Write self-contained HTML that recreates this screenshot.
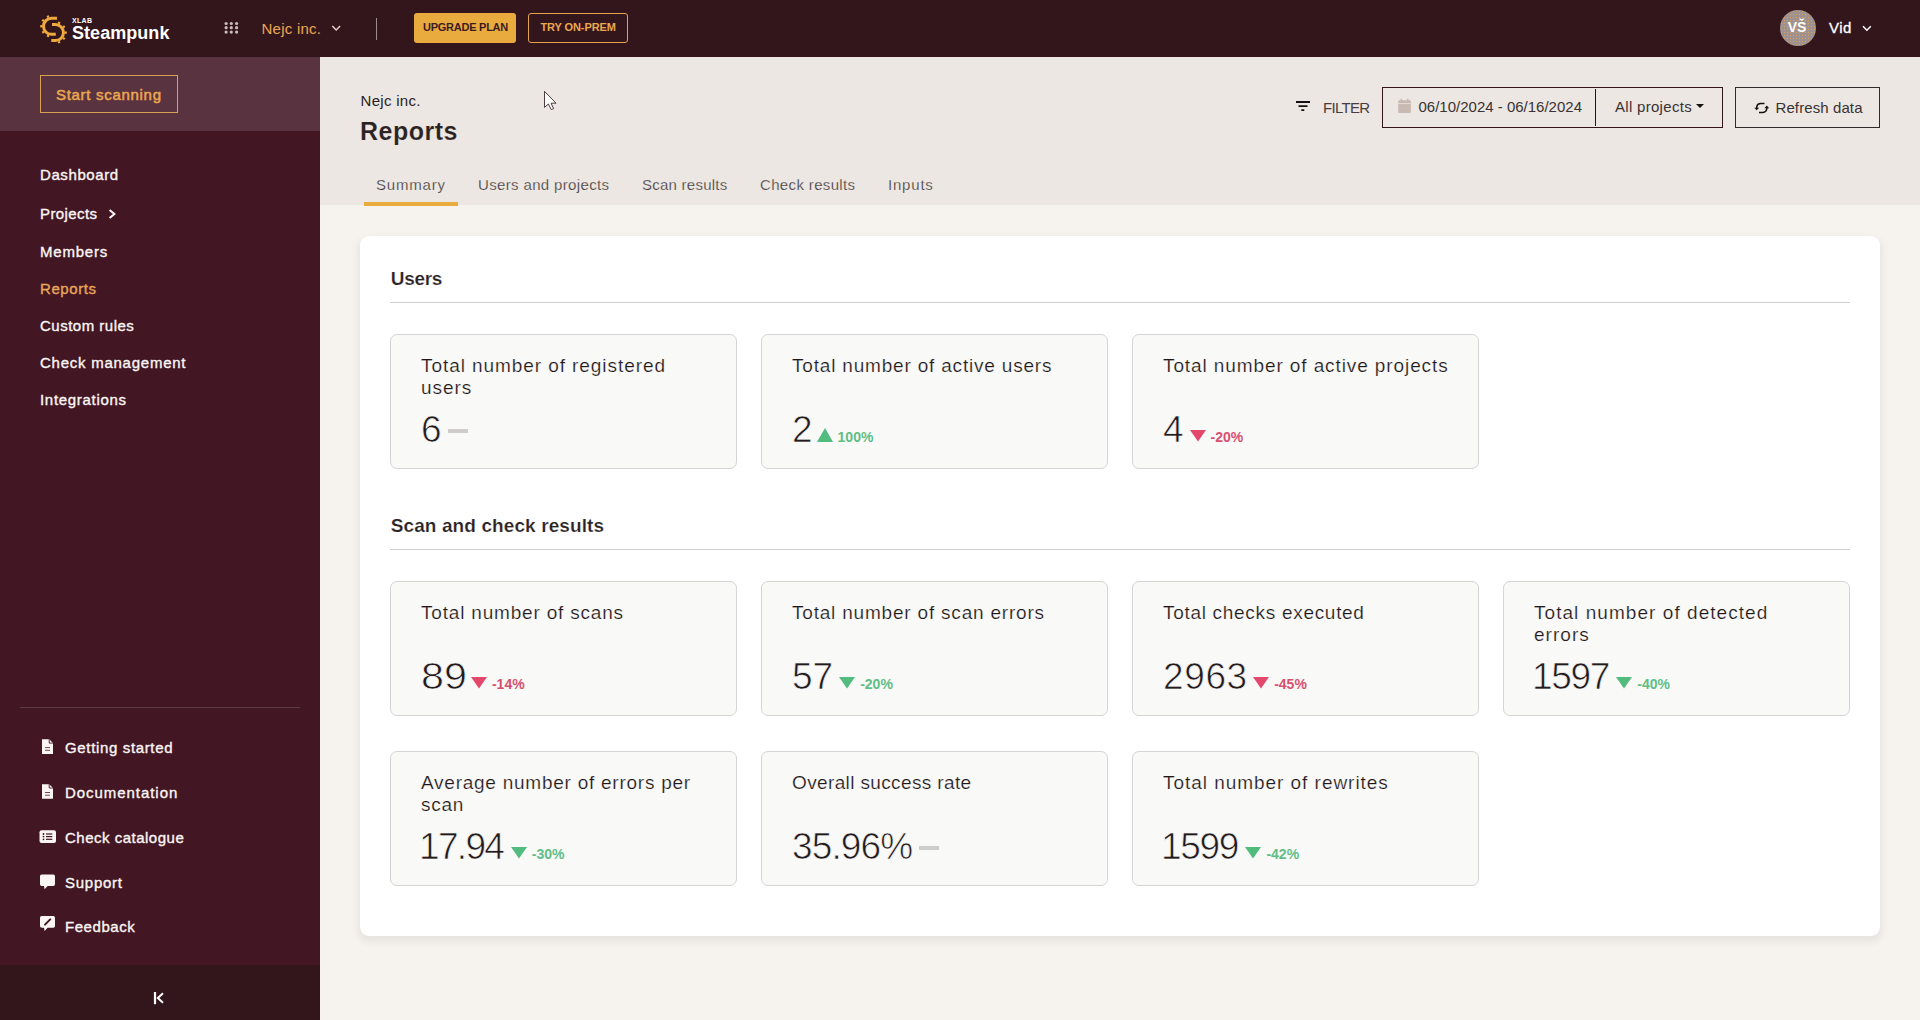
<!DOCTYPE html>
<html><head><meta charset="utf-8"><style>
*{margin:0;padding:0;box-sizing:border-box}
html,body{width:1920px;height:1020px;overflow:hidden;background:#f6f3ee;font-family:"Liberation Sans",sans-serif}
.a{position:absolute}
.t{position:absolute;white-space:nowrap;line-height:1}
.ct{position:absolute;font-size:19px;line-height:22px;color:#1f1718;letter-spacing:1px;white-space:nowrap;-webkit-text-stroke:.2px #f9f9f8}
.cn{position:absolute;font-size:37px;line-height:1;color:#231b1c;white-space:nowrap;-webkit-text-stroke:.7px #f9f9f8}
.cn span{-webkit-text-stroke:inherit}
.card{position:absolute;width:347px;height:135px;background:#f9f9f8;border:1px solid #d6d4d2;border-radius:7px}
.rule{position:absolute;left:390px;width:1460px;height:1px;background:#d3d1cf}
svg{position:absolute;overflow:visible}
</style></head><body>
<div class="a" style="left:0;top:0;width:1920px;height:57px;background:#33161c"></div>
<div class="a" style="left:0;top:57px;width:320px;height:963px;background:#421723"></div>
<div class="a" style="left:0;top:57px;width:320px;height:74px;background:#5a3341"></div>
<div class="a" style="left:0;top:965px;width:320px;height:55px;background:#33161c"></div>
<div class="a" style="left:320px;top:57px;width:1600px;height:148px;background:#ece7e2"></div>
<div class="a" style="left:360px;top:236px;width:1520px;height:700px;background:#fff;border-radius:9px;box-shadow:0 4px 7px 2px rgba(60,45,40,.075)"></div>
<svg style="left:0;top:0" width="1" height="1">
<g fill="none" stroke="#eeaa3c" stroke-width="3">
<path d="M57,18.3 L51.5,18.3 A8,8 0 0 0 51.5,34.3 L55.8,34.3"/>
<path d="M52,24.6 L55.5,24.6 A8,8 0 0 1 55.5,40.6 L51.3,40.6"/>
</g>
<rect x="60.70" y="25.15" width="2.1" height="2.3" fill="#eeaa3c" transform="rotate(250 51.5 26.3)"/><rect x="60.70" y="25.15" width="2.1" height="2.3" fill="#eeaa3c" transform="rotate(215 51.5 26.3)"/><rect x="60.70" y="25.15" width="2.1" height="2.3" fill="#eeaa3c" transform="rotate(180 51.5 26.3)"/><rect x="60.70" y="25.15" width="2.1" height="2.3" fill="#eeaa3c" transform="rotate(145 51.5 26.3)"/><rect x="60.70" y="25.15" width="2.1" height="2.3" fill="#eeaa3c" transform="rotate(110 51.5 26.3)"/>
<rect x="64.70" y="31.45" width="2.1" height="2.3" fill="#eeaa3c" transform="rotate(-70 55.5 32.6)"/><rect x="64.70" y="31.45" width="2.1" height="2.3" fill="#eeaa3c" transform="rotate(-35 55.5 32.6)"/><rect x="64.70" y="31.45" width="2.1" height="2.3" fill="#eeaa3c" transform="rotate(0 55.5 32.6)"/><rect x="64.70" y="31.45" width="2.1" height="2.3" fill="#eeaa3c" transform="rotate(35 55.5 32.6)"/><rect x="64.70" y="31.45" width="2.1" height="2.3" fill="#eeaa3c" transform="rotate(70 55.5 32.6)"/>
</svg>
<div class="t" style="left:72px;top:17.07px;font-size:7px;color:#fff;font-weight:bold;letter-spacing:.3px">XLAB</div>

<div class="t" style="left:72px;top:23.51px;font-size:18px;color:#fff;font-weight:bold;letter-spacing:.05px">Steampunk</div>

<svg style="left:0;top:0" width="1" height="1"><circle cx="226.1" cy="23.5" r="1.6" fill="#cbbcbd"/><circle cx="226.1" cy="27.7" r="1.6" fill="#cbbcbd"/><circle cx="226.1" cy="32.1" r="1.6" fill="#cbbcbd"/><circle cx="231.3" cy="23.5" r="1.6" fill="#cbbcbd"/><circle cx="231.3" cy="27.7" r="1.6" fill="#cbbcbd"/><circle cx="231.3" cy="32.1" r="1.6" fill="#cbbcbd"/><circle cx="236.6" cy="23.5" r="1.6" fill="#cbbcbd"/><circle cx="236.6" cy="27.7" r="1.6" fill="#cbbcbd"/><circle cx="236.6" cy="32.1" r="1.6" fill="#cbbcbd"/></svg>
<div class="t" style="left:261.5px;top:20.60px;font-size:15px;color:#eba84f;letter-spacing:.25px">Nejc inc.</div>

<svg style="left:0;top:0" width="1" height="1"><path d="M332.3,25.9 L336.2,29.9 L340.1,25.9" fill="none" stroke="#e8d4c8" stroke-width="1.4"/></svg>
<div class="a" style="left:376px;top:18px;width:1.4px;height:22px;background:#9a8a8c"></div>
<div class="a" style="left:414px;top:13px;width:102px;height:30px;background:#eaab3e;border-radius:3px"></div>
<div class="a" style="left:528px;top:13px;width:100px;height:30px;border:1px solid #e3a24c;border-radius:3px"></div>
<div class="t" style="left:423px;top:21.94px;font-size:11px;color:#3b1c22;font-weight:bold;letter-spacing:-.25px">UPGRADE PLAN</div>

<div class="t" style="left:540.5px;top:21.94px;font-size:11px;color:#eba84f;font-weight:bold;letter-spacing:-.1px">TRY ON-PREM</div>

<div class="a" style="left:1780px;top:10px;width:36px;height:36px;border-radius:50%;background:radial-gradient(circle at 1.5px 1.5px,#d9a060 0,#d9a060 .45px,rgba(217,160,96,0) .8px) 0 0/3px 3px,#9e918e"></div>
<div class="t" style="left:1787.8px;top:20.15px;font-size:14px;color:#fff;font-weight:bold;letter-spacing:-.2px">VŠ</div>

<div class="t" style="left:1829px;top:20.20px;font-size:15px;color:#fff;-webkit-text-stroke:.3px #fff;letter-spacing:.5px">Vid</div>

<svg style="left:0;top:0" width="1" height="1"><path d="M1863,26.3 L1866.9,30.2 L1870.8,26.3" fill="none" stroke="#fff" stroke-width="1.5"/></svg>
<div class="a" style="left:40px;top:75px;width:138px;height:38px;border:1px solid #d9a057"></div>
<div class="t" style="left:56px;top:86.50px;font-size:15px;color:#eba84f;-webkit-text-stroke:.5px #eba84f;letter-spacing:.7px">Start scanning</div>

<div class="t" style="left:40px;top:167.00px;font-size:15px;color:#fbf6f4;-webkit-text-stroke:.35px #fbf6f4;letter-spacing:0.6px">Dashboard</div>

<div class="t" style="left:40px;top:206.10px;font-size:15px;color:#fbf6f4;-webkit-text-stroke:.35px #fbf6f4;letter-spacing:0.4px">Projects</div>

<div class="t" style="left:40px;top:244.30px;font-size:15px;color:#fbf6f4;-webkit-text-stroke:.35px #fbf6f4;letter-spacing:0.8px">Members</div>

<div class="t" style="left:40px;top:281.00px;font-size:15px;color:#e9a75a;-webkit-text-stroke:.35px #e9a75a;letter-spacing:0.6px">Reports</div>

<div class="t" style="left:40px;top:318.20px;font-size:15px;color:#fbf6f4;-webkit-text-stroke:.35px #fbf6f4;letter-spacing:0.5px">Custom rules</div>

<div class="t" style="left:40px;top:355.30px;font-size:15px;color:#fbf6f4;-webkit-text-stroke:.35px #fbf6f4;letter-spacing:0.75px">Check management</div>

<div class="t" style="left:40px;top:392.00px;font-size:15px;color:#fbf6f4;-webkit-text-stroke:.35px #fbf6f4;letter-spacing:0.7px">Integrations</div>

<svg style="left:0;top:0" width="1" height="1"><path d="M109.6,210 L114.4,214 L109.6,218" fill="none" stroke="#fbf6f4" stroke-width="2"/></svg>
<div class="a" style="left:20px;top:707px;width:280px;height:1px;background:#5b3b45"></div>
<div class="t" style="left:65px;top:739.80px;font-size:15px;color:#fbf6f4;-webkit-text-stroke:.35px #fbf6f4;letter-spacing:0.65px">Getting started</div>

<div class="t" style="left:65px;top:785.30px;font-size:15px;color:#fbf6f4;-webkit-text-stroke:.35px #fbf6f4;letter-spacing:0.95px">Documentation</div>

<div class="t" style="left:65px;top:830.10px;font-size:15px;color:#fbf6f4;-webkit-text-stroke:.35px #fbf6f4;letter-spacing:0.5px">Check catalogue</div>

<div class="t" style="left:65px;top:874.80px;font-size:15px;color:#fbf6f4;-webkit-text-stroke:.35px #fbf6f4;letter-spacing:0.75px">Support</div>

<div class="t" style="left:65px;top:919.00px;font-size:15px;color:#fbf6f4;-webkit-text-stroke:.35px #fbf6f4;letter-spacing:0.55px">Feedback</div>

<svg style="left:0;top:0" width="1" height="1"><path d="M42,739.3 h7.2 l3.8,3.8 v10.8 h-11 z" fill="#fbf6f3"/><path d="M49.2,739.3 v3.8 h3.8" fill="none" stroke="#421723" stroke-width=".9"/><path d="M45,747.5999999999999 h5 M45,750.3 h5" stroke="#6a4a50" stroke-width="1"/><path d="M42,784.2 h7.2 l3.8,3.8 v10.8 h-11 z" fill="#fbf6f3"/><path d="M49.2,784.2 v3.8 h3.8" fill="none" stroke="#421723" stroke-width=".9"/><path d="M45,792.5 h5 M45,795.2 h5" stroke="#6a4a50" stroke-width="1"/></svg>
<svg style="left:0;top:0" width="1" height="1"><rect x="39.5" y="830.2" width="16.5" height="12.8" rx="2" fill="#fbf6f3"/><circle cx="43.5" cy="834" r=".9" fill="#421723"/><path d="M46,834 h6.3" stroke="#421723" stroke-width="1.2"/><circle cx="43.5" cy="836.6" r=".9" fill="#421723"/><path d="M46,836.6 h6.3" stroke="#421723" stroke-width="1.2"/><circle cx="43.5" cy="839.3" r=".9" fill="#421723"/><path d="M46,839.3 h6.3" stroke="#421723" stroke-width="1.2"/></svg>
<svg style="left:0;top:0" width="1" height="1"><path d="M41.8,874.5 h11.4 a1.8,1.8 0 0 1 1.8,1.8 v7.9 a1.8,1.8 0 0 1 -1.8,1.8 h-5.6 l-3,3.2 l-.6,-3.2 h-2.2 a1.8,1.8 0 0 1 -1.8,-1.8 v-7.9 a1.8,1.8 0 0 1 1.8,-1.8 z" fill="#fbf6f3"/><path d="M41.8,916 h11.4 a1.8,1.8 0 0 1 1.8,1.8 v8.2 a1.8,1.8 0 0 1 -1.8,1.8 h-5.6 l-3,3.2 l-.6,-3.2 h-2.2 a1.8,1.8 0 0 1 -1.8,-1.8 v-8.2 a1.8,1.8 0 0 1 1.8,-1.8 z" fill="#fbf6f3"/><path d="M45,924.6 L50.2,919.4" stroke="#421723" stroke-width="2" stroke-linecap="round"/></svg>
<svg style="left:0;top:0" width="1" height="1"><path d="M155,992 v12.2" stroke="#fff" stroke-width="2.2"/><path d="M163,993.2 L157.8,997.9 L163,1002.8" fill="none" stroke="#fff" stroke-width="2"/></svg>
<div class="t" style="left:360.5px;top:92.80px;font-size:15px;color:#2b2223;letter-spacing:.3px">Nejc inc.</div>

<div class="t" style="left:360px;top:118.84px;font-size:25px;color:#2b2223;font-weight:bold;letter-spacing:.5px;-webkit-text-stroke:.15px #ece7e2">Reports</div>

<div class="t" style="left:376px;top:176.55px;font-size:15px;color:#3a3233;letter-spacing:0.8px;-webkit-text-stroke:.25px #ece7e2">Summary</div>

<div class="t" style="left:478px;top:176.55px;font-size:15px;color:#3a3233;letter-spacing:0.35px;-webkit-text-stroke:.25px #ece7e2">Users and projects</div>

<div class="t" style="left:642px;top:176.55px;font-size:15px;color:#3a3233;letter-spacing:0.25px;-webkit-text-stroke:.25px #ece7e2">Scan results</div>

<div class="t" style="left:760px;top:176.55px;font-size:15px;color:#3a3233;letter-spacing:0.35px;-webkit-text-stroke:.25px #ece7e2">Check results</div>

<div class="t" style="left:888px;top:176.55px;font-size:15px;color:#3a3233;letter-spacing:0.8px;-webkit-text-stroke:.25px #ece7e2">Inputs</div>

<div class="a" style="left:364px;top:202px;width:94px;height:3.5px;background:#eaab3e"></div>
<svg style="left:0;top:0" width="1" height="1"><path d="M1296,102 h14 M1298.5,106.1 h9 M1301.3,110.1 h3" stroke="#161011" stroke-width="1.9"/></svg>
<div class="t" style="left:1323px;top:99.60px;font-size:15px;color:#4a3b3f;letter-spacing:-.7px">FILTER</div>

<div class="a" style="left:1382px;top:87px;width:341px;height:41px;border:1.2px solid #33161c"></div>
<div class="a" style="left:1594.6px;top:89px;width:1.3px;height:37px;background:#2a1217"></div>
<div class="a" style="left:1735px;top:87px;width:145px;height:41px;border:1.2px solid #2f2a2b"></div>
<svg style="left:0;top:0" width="1" height="1"><rect x="1398.2" y="100.3" width="12.7" height="12.6" rx="1" fill="#c9b9b3"/><rect x="1400.5" y="98.8" width="1.6" height="3" fill="#c9b9b3"/><rect x="1407" y="98.8" width="1.6" height="3" fill="#c9b9b3"/><path d="M1398.2,103.6 h12.7" stroke="#ece7e2" stroke-width=".8"/></svg>
<div class="t" style="left:1418.5px;top:98.60px;font-size:15px;color:#3a3233;letter-spacing:0px">06/10/2024 - 06/16/2024</div>

<div class="t" style="left:1615px;top:98.60px;font-size:15px;color:#3a3233;letter-spacing:.3px">All projects</div>

<svg style="left:0;top:0" width="1" height="1"><path d="M1696,104 h8 l-4,4 z" fill="#161011"/></svg>
<svg style="left:0;top:0" width="1" height="1"><g fill="none" stroke="#161011" stroke-width="1.5"><path d="M1764.5,103.6 h-4 a4,4 0 0 0 -3.8,3.2 v1.6"/><path d="M1759,112.4 h4 a4,4 0 0 0 3.8,-3.2 v-1.6"/></g><path d="M1754.3,107.7 h4.8 l-2.4,2.6 z M1764.4,108.2 h4.8 l-2.4,-2.6 z" fill="#161011"/></svg>
<div class="t" style="left:1775.5px;top:99.80px;font-size:15px;color:#3a3233;letter-spacing:.1px">Refresh data</div>

<svg style="left:0;top:0" width="1" height="1"><path d="M544.5,91.3 L544.5,107.4 L548.4,104 L551.3,109.6 L553.6,108.6 L551,103.2 L556,103.2 Z" fill="#fff" stroke="#3a2a2e" stroke-width=".9" stroke-linejoin="round"/></svg>
<div class="rule" style="top:302px"></div>
<div class="rule" style="top:549px"></div>
<div class="t" style="left:390.75px;top:269.42px;font-size:19px;color:#2b2223;font-weight:bold;letter-spacing:-.3px;-webkit-text-stroke:.2px #fff">Users</div>

<div class="t" style="left:390.75px;top:515.92px;font-size:19px;color:#2b2223;font-weight:bold;letter-spacing:.1px;-webkit-text-stroke:.2px #fff">Scan and check results</div>

<div class="card" style="left:390px;top:334px"></div>
<div class="card" style="left:761px;top:334px"></div>
<div class="card" style="left:1132px;top:334px"></div>
<div class="card" style="left:390px;top:581px"></div>
<div class="card" style="left:761px;top:581px"></div>
<div class="card" style="left:1132px;top:581px"></div>
<div class="card" style="left:1503px;top:581px"></div>
<div class="card" style="left:390px;top:751px"></div>
<div class="card" style="left:761px;top:751px"></div>
<div class="card" style="left:1132px;top:751px"></div>
<div class="ct" style="left:421px;top:354.97px;letter-spacing:0.93px">Total number of registered<br>users</div>
<div class="cn" style="left:421px;top:410.68px">6<span style="display:inline-block;width:20px;height:4px;background:#cfcdcb;margin-left:6px;vertical-align:middle;position:relative;top:-1px"></span></div>
<div class="ct" style="left:792px;top:354.97px;letter-spacing:0.81px">Total number of active users</div>
<div class="cn" style="left:792px;top:410.68px">2<svg style="position:relative;margin-left:4px" width="16" height="14"><polygon points="8,0 16,14 0,14" fill="#52bb7e"/></svg><span style="font-size:14px;font-weight:bold;color:#5fbe86;margin-left:5px;letter-spacing:0;-webkit-text-stroke:0">100%</span></div>
<div class="ct" style="left:1163px;top:354.97px;letter-spacing:0.9px">Total number of active projects</div>
<div class="cn" style="left:1163px;top:410.68px">4<svg style="position:relative;margin-left:6px" width="16" height="11.5"><polygon points="0,0 16,0 8,11.5" fill="#e3486c"/></svg><span style="font-size:14px;font-weight:bold;color:#d8506f;margin-left:5px;letter-spacing:0;-webkit-text-stroke:0">-20%</span></div>
<div class="ct" style="left:421px;top:601.97px;letter-spacing:0.81px">Total number of scans</div>
<div class="cn" style="left:421px;top:657.68px"><span style="display:inline-block;transform:scaleX(1.115);transform-origin:0 0;margin-right:2.8px">89</span><svg style="position:relative;margin-left:6px" width="16" height="11.5"><polygon points="0,0 16,0 8,11.5" fill="#e3486c"/></svg><span style="font-size:14px;font-weight:bold;color:#d8506f;margin-left:5px;letter-spacing:0;-webkit-text-stroke:0">-14%</span></div>
<div class="ct" style="left:792px;top:601.97px;letter-spacing:0.8px">Total number of scan errors</div>
<div class="cn" style="left:792px;top:657.68px"><span style="letter-spacing:0px">5</span>7<svg style="position:relative;margin-left:6px" width="16" height="11.5"><polygon points="0,0 16,0 8,11.5" fill="#52bb7e"/></svg><span style="font-size:14px;font-weight:bold;color:#5fbe86;margin-left:5px;letter-spacing:0;-webkit-text-stroke:0">-20%</span></div>
<div class="ct" style="left:1163px;top:601.97px;letter-spacing:0.7px">Total checks executed</div>
<div class="cn" style="left:1163px;top:657.68px"><span style="letter-spacing:0.6px">2</span><span style="letter-spacing:0.6px">9</span><span style="letter-spacing:0.6px">6</span>3<svg style="position:relative;margin-left:6px" width="16" height="11.5"><polygon points="0,0 16,0 8,11.5" fill="#e3486c"/></svg><span style="font-size:14px;font-weight:bold;color:#d8506f;margin-left:5px;letter-spacing:0;-webkit-text-stroke:0">-45%</span></div>
<div class="ct" style="left:1534px;top:601.97px;letter-spacing:1.05px">Total number of detected<br>errors</div>
<div class="cn" style="left:1532px;top:657.68px"><span style="letter-spacing:-1.35px">1</span><span style="letter-spacing:-1.35px">5</span><span style="letter-spacing:-1.35px">9</span>7<svg style="position:relative;margin-left:6px" width="16" height="11.5"><polygon points="0,0 16,0 8,11.5" fill="#52bb7e"/></svg><span style="font-size:14px;font-weight:bold;color:#5fbe86;margin-left:5px;letter-spacing:0;-webkit-text-stroke:0">-40%</span></div>
<div class="ct" style="left:421px;top:771.97px;letter-spacing:0.75px">Average number of errors per<br>scan</div>
<div class="cn" style="left:419px;top:827.68px"><span style="letter-spacing:-1.7px">1</span><span style="letter-spacing:-1.7px">7</span><span style="letter-spacing:-1.7px">.</span><span style="letter-spacing:-1.7px">9</span>4<svg style="position:relative;margin-left:6px" width="16" height="11.5"><polygon points="0,0 16,0 8,11.5" fill="#52bb7e"/></svg><span style="font-size:14px;font-weight:bold;color:#5fbe86;margin-left:5px;letter-spacing:0;-webkit-text-stroke:0">-30%</span></div>
<div class="ct" style="left:792px;top:771.97px;letter-spacing:0.37px">Overall success rate</div>
<div class="cn" style="left:792px;top:827.68px"><span style="letter-spacing:-0.9px">3</span><span style="letter-spacing:-0.9px">5</span><span style="letter-spacing:-0.9px">.</span><span style="letter-spacing:-0.9px">9</span><span style="letter-spacing:-0.9px">6</span>%<span style="display:inline-block;width:20px;height:4px;background:#cfcdcb;margin-left:6px;vertical-align:middle;position:relative;top:-1px"></span></div>
<div class="ct" style="left:1163px;top:771.97px;letter-spacing:0.96px">Total number of rewrites</div>
<div class="cn" style="left:1161px;top:827.68px"><span style="letter-spacing:-1.3px">1</span><span style="letter-spacing:-1.3px">5</span><span style="letter-spacing:-1.3px">9</span>9<svg style="position:relative;margin-left:6px" width="16" height="11.5"><polygon points="0,0 16,0 8,11.5" fill="#52bb7e"/></svg><span style="font-size:14px;font-weight:bold;color:#5fbe86;margin-left:5px;letter-spacing:0;-webkit-text-stroke:0">-42%</span></div>
</body></html>
